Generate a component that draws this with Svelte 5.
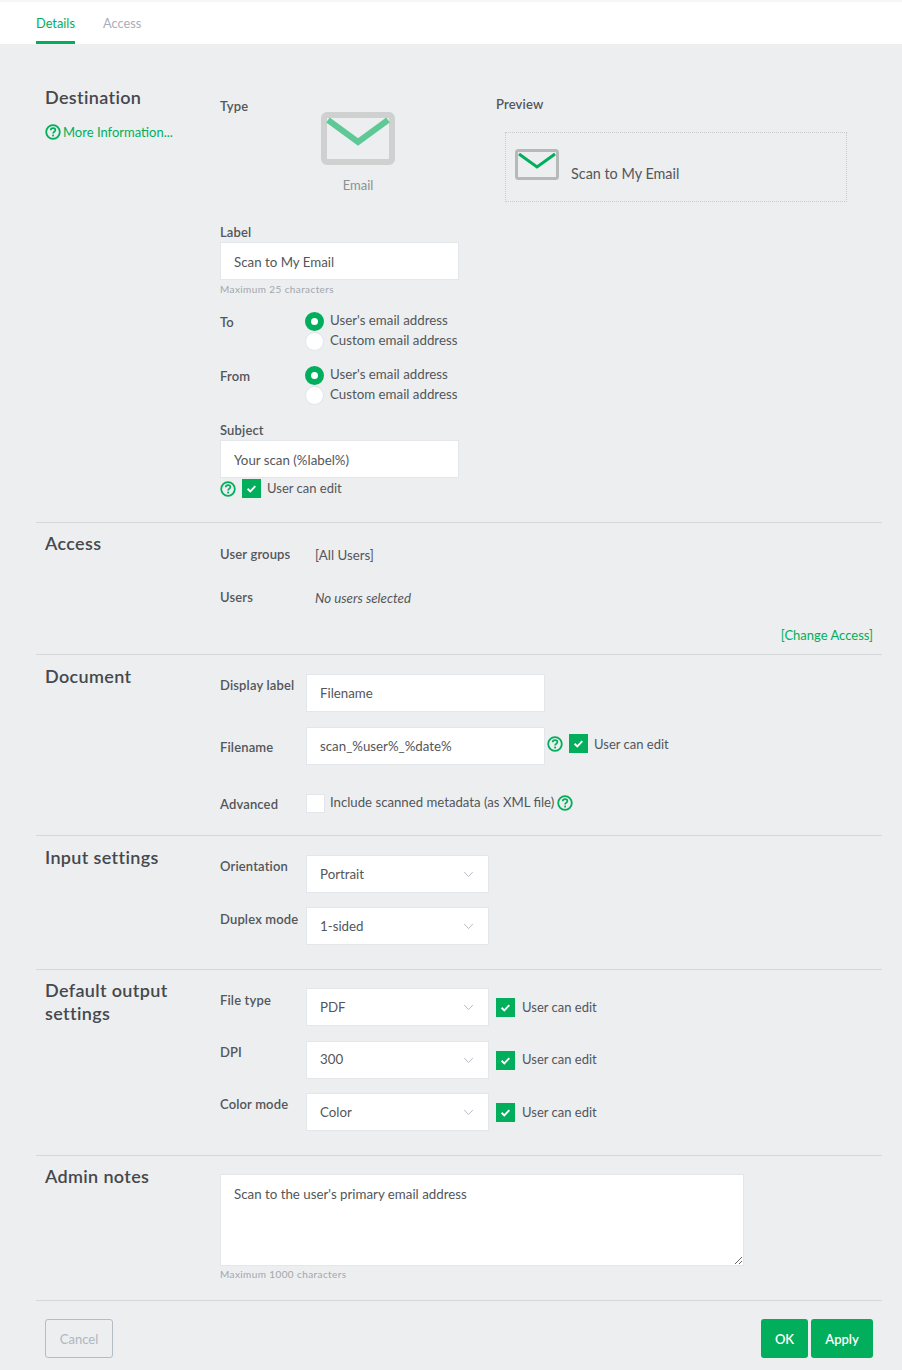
<script>
  const help = 'M8 1.2a6.8 6.8 0 1 0 0 13.6a6.8 6.8 0 0 0 0-13.6z';
</script>

{#snippet helpIcon()}
  <svg class="help" viewBox="0 0 16 16" aria-hidden="true">
    <path d={help} fill="none" stroke="#00ae5b" stroke-width="1.8" />
    <path d="M5.7 6.2c.1-1.4 1.1-2.1 2.4-2.1s2.3.8 2.3 1.9c0 1.7-2.3 1.7-2.3 3.4" fill="none" stroke="#00ae5b" stroke-width="1.7" />
    <rect x="7.2" y="10.6" width="1.8" height="1.8" fill="#00ae5b" />
  </svg>
{/snippet}

{#snippet check()}
  <span class="check on">
    <svg viewBox="0 0 19 19" aria-hidden="true"><path d="M5.6 9.8l2.7 2.6l5-5.2" fill="none" stroke="#fff" stroke-width="1.9" /></svg>
  </span>
{/snippet}

{#snippet select(value)}
  <div class="select">
    <span>{value}</span>
    <svg viewBox="0 0 12 8" aria-hidden="true"><path d="M1 1l5 5.4L11 1" fill="none" stroke="#b4bac2" stroke-width="1.1" /></svg>
  </div>
{/snippet}

{#snippet radios()}
  <div class="radios">
    <div class="radio-row"><span class="radio on"></span><span class="rt">User's email address</span></div>
    <div class="radio-row"><span class="radio"></span><span class="rt">Custom email address</span></div>
  </div>
{/snippet}

<div class="page">
  <nav class="tabs">
    <span class="tab active">Details</span>
    <span class="tab">Access</span>
  </nav>

  <main class="form">
    <section class="sec dest">
      <div class="side">
        <h2>Destination</h2>
        <div class="more">{@render helpIcon()}<span>More Information...</span></div>
      </div>
      <div class="body">
        <div class="dest-top">
          <div class="type">
            <span class="lbl type-lbl">Type</span>
            <div class="type-pick">
              <svg class="env" viewBox="0 0 74 53" aria-hidden="true">
                <rect x="3" y="3" width="68" height="47" rx="3" fill="#eceef0" stroke="#cfd1d1" stroke-width="6" />
                <path d="M7 8l30 22L67 8" fill="none" stroke="#5ec997" stroke-width="6" />
              </svg>
              <span class="email">Email</span>
            </div>
          </div>
          <div class="preview">
            <span class="lbl">Preview</span>
            <div class="pv-box">
              <svg class="env-s" viewBox="0 0 44 31" aria-hidden="true">
                <rect x="1.5" y="1.5" width="41" height="28" rx="2" fill="#eceef0" stroke="#b7b9b9" stroke-width="3" />
                <path d="M4 5l18 13L40 5" fill="none" stroke="#00ae5b" stroke-width="3" />
              </svg>
              <span>Scan to My Email</span>
            </div>
          </div>
        </div>

        <label class="lbl stack l-label" for="f-label">Label</label>
        <input id="f-label" class="input w239 low" value="Scan to My Email" readonly />
        <div class="hint">Maximum 25 characters</div>

        <div class="pair to"><span class="lbl k">To</span>{@render radios()}</div>
        <div class="pair from"><span class="lbl k">From</span>{@render radios()}</div>

        <label class="lbl stack l-subject" for="f-subject">Subject</label>
        <input id="f-subject" class="input w239 low" value="Your scan (%label%)" readonly />
        <div class="edit-row sub-edit">{@render helpIcon()}{@render check()}<span class="ue">User can edit</span></div>
      </div>
    </section>

    <section class="sec access">
      <div class="side"><h2>Access</h2></div>
      <div class="body">
        <div class="ac-row"><span class="lbl">User groups</span><span class="val">[All Users]</span></div>
        <div class="ac-row second"><span class="lbl">Users</span><span class="val"><em>No users selected</em></span></div>
        <div class="change">[Change Access]</div>
      </div>
    </section>

    <section class="sec doc">
      <div class="side"><h2>Document</h2></div>
      <div class="body">
        <div class="row">
          <span class="lbl k">Display label</span>
          <input class="input w239" value="Filename" readonly />
        </div>
        <div class="row filename">
          <span class="lbl k">Filename</span>
          <input class="input w239" value="scan_%user%_%date%" readonly />
          <div class="edit-row fn-edit">{@render helpIcon()}{@render check()}<span class="ue">User can edit</span></div>
        </div>
        <div class="row advanced">
          <span class="lbl k">Advanced</span>
          <span class="check"></span>
          <span class="adv-text">Include scanned metadata (as XML file)</span>
          {@render helpIcon()}
        </div>
      </div>
    </section>

    <section class="sec input-s">
      <div class="side"><h2>Input settings</h2></div>
      <div class="body">
        <div class="row sel-row"><span class="lbl k">Orientation</span>{@render select('Portrait')}</div>
        <div class="row sel-row"><span class="lbl k">Duplex mode</span>{@render select('1-sided')}</div>
      </div>
    </section>

    <section class="sec output">
      <div class="side"><h2>Default output settings</h2></div>
      <div class="body">
        {#each [['File type', 'PDF'], ['DPI', '300'], ['Color mode', 'Color']] as [k, v]}
          <div class="row sel-row">
            <span class="lbl k">{k}</span>{@render select(v)}
            <div class="edit-row sel-edit">{@render check()}<span class="ue">User can edit</span></div>
          </div>
        {/each}
      </div>
    </section>

    <section class="sec notes">
      <div class="side"><h2>Admin notes</h2></div>
      <div class="body">
        <textarea readonly>Scan to the user's primary email address</textarea>
        <div class="hint">Maximum 1000 characters</div>
      </div>
    </section>

    <footer class="actions">
      <button class="btn cancel">Cancel</button>
      <div class="right">
        <button class="btn primary ok">OK</button>
        <button class="btn primary apply">Apply</button>
      </div>
    </footer>
  </main>
</div>

<style>
  :global(body) { margin: 0; background: #eceef0; }
  .page {
    width: 902px;
    height: 1370px;
    overflow: hidden;
    font-family: Lato, "Open Sans", sans-serif;
    font-size: 13.3px;
    line-height: 18px;
    color: #53565a;
    background: #eceef0;
  }
  .tabs {
    box-sizing: border-box;
    height: 44px;
    padding: 0 36px;
    display: flex;
    gap: 28px;
    background: #fff;
    border-top: 2px solid #f6f6f6;
  }
  .tab {
    box-sizing: border-box;
    height: 42px;
    padding-top: 12px;
    font-size: 12.8px;
    color: #a9aeb8;
  }
  .tab.active { color: #00ae5b; border-bottom: 3px solid #00ae5b; }

  .form { margin: 0 20px 0 36px; }
  .sec {
    display: grid;
    grid-template-columns: 175px 1fr;
    padding-left: 9px;
    border-bottom: 1px solid #d5d8da;
    box-sizing: border-box;
  }
  h2 {
    margin: -1px 0 0;
    font-size: 18px;
    line-height: 23px;
    font-weight: 600;
    color: #45484c;
    letter-spacing: 0.35px;
  }
  .lbl { font-weight: 600; font-size: 13px; letter-spacing: 0.15px; color: #53565a; }
  .ue { font-size: 13px; }
  .stack { display: block; }
  .input {
    display: block;
    box-sizing: border-box;
    height: 38px;
    padding: 0 13px;
    border: 1px solid #e3e6ea;
    background: #fff;
    font: inherit;
    color: #53565a;
    outline: none;
  }
  .input.low { padding-top: 2px; }
  .w239 { width: 239px; }
  .hint { font-size: 10px; line-height: 12px; letter-spacing: 0.4px; color: #a3a6aa; margin-top: 3px; }

  .help { display: block; width: 16px; height: 16px; flex: none; }

  .check {
    box-sizing: border-box;
    display: block;
    flex: none;
    width: 19px;
    height: 19px;
    background: #fff;
    border: 1px solid #e3e6ea;
  }
  .check.on { background: #00ae5b; border: 0; }
  .check svg { display: block; width: 19px; height: 19px; }

  .edit-row { display: flex; align-items: center; }
  .edit-row .check { margin-left: 6px; margin-right: 6px; }

  /* destination */
  .dest { height: 479px; padding-top: 43px; }
  .more { display: flex; align-items: center; gap: 2px; margin-top: 14px; color: #00ae5b; font-size: 13px; }
  .dest-top { display: flex; height: 121px; margin-top: 10px; }
  .type { width: 276px; position: relative; display: flex; }
  .type-lbl { width: 101px; }
  .type-pick { display: flex; flex-direction: column; align-items: center; width: 74px; padding-top: 15px; }
  .env { display: block; width: 74px; height: 53px; flex: none; }
  .email { margin-top: 11px; font-size: 13px; color: #8d9094; }
  .preview { margin-top: -2px; }
  .pv-box {
    box-sizing: border-box;
    width: 342px;
    height: 70px;
    margin: 19px 0 0 9px;
    padding: 16px 9px 0;
    border: 1px dotted #c9cbce;
    display: flex;
    gap: 12px;
    font-size: 14.4px;
  }
  .env-s { display: block; width: 44px; height: 31px; flex: none; }
  .pv-box span { margin-top: 16px; }
  .l-label { margin-top: 5px; margin-bottom: 1px; height: 18px; }
  .pair { display: flex; }
  .k { flex: none; width: 86px; }
  .to { margin-top: 17px; }
  .from { margin-top: 16px; }
  .pair .k { padding-top: 1px; }
  .radios { display: flex; flex-direction: column; gap: 2px; margin-left: -1px; }
  .radio-row { display: flex; align-items: center; gap: 6px; height: 18px; }
  .rt { margin-top: -2px; }
  .radio {
    box-sizing: border-box;
    flex: none;
    width: 19px;
    height: 19px;
    border-radius: 50%;
    background: #fff;
    border: 1px solid #e3e6ea;
  }
  .radio.on { border: 6.5px solid #00ae5b; }
  .l-subject { margin-top: 17px; margin-bottom: 1px; height: 18px; }
  .sub-edit { margin-top: 1px; }
  .sub-edit .ue { margin-top: -2px; }

  /* access */
  .access { height: 132px; padding-top: 10px; }
  .ac-row { display: flex; margin-top: 12px; height: 18px; }
  .ac-row.second { margin-top: 25px; }
  .ac-row .lbl { width: 95px; flex: none; }
  .val { padding-top: 1px; }
  .change { margin: 20px 9px 0 0; text-align: right; color: #00ae5b; font-size: 13px; }

  /* document */
  .doc { height: 181px; padding-top: 11px; }
  .doc .body { padding-top: 8px; }
  .row { display: flex; }
  .filename { margin-top: 15px; }
  .filename .k { padding-top: 11px; }
  .doc .row:first-child .k { padding-top: 2px; }
  .fn-edit { margin: 7px 0 0 2px; align-self: flex-start; }
  .advanced { margin-top: 28px; align-items: center; }
  .advanced .k { padding-top: 2px; }
  .adv-text { margin: -2px 3px 0 5px; font-size: 13.2px; }

  /* selects */
  .select {
    box-sizing: border-box;
    flex: none;
    width: 183px;
    height: 38px;
    padding: 0 14px 0 13px;
    background: #fff;
    border: 1px solid #e3e6ea;
    display: flex;
    align-items: center;
    justify-content: space-between;
  }
  .select svg { display: block; width: 11px; height: 7px; }
  .input-s { height: 134px; padding-top: 11px; }
  .input-s .body { padding-top: 8px; }
  .sel-row .k { padding-top: 2px; }
  .sel-row + .sel-row { margin-top: 14px; }
  .input-s .sel-row:nth-child(2) .k { padding-top: 3px; }
  .output { height: 186px; padding-top: 10px; }
  .output .body { padding-top: 8px; }
  .output .sel-row:nth-child(1) .k { padding-top: 3px; }
  .output .sel-row:nth-child(2) { margin-top: 15px; }
  .output .sel-row:nth-child(2) .select span { margin-top: -2px; }
  .output .sel-row:nth-child(2) .ue { margin-top: -2px; }
  .sel-edit { margin-left: 1px; align-self: center; }
  .sel-edit .check { margin-left: 6px; margin-right: 7px; }

  /* notes */
  .notes { height: 145px; padding-top: 10px; }
  .notes .body { padding-top: 8px; }
  textarea {
    display: block;
    box-sizing: border-box;
    width: 524px;
    height: 92px;
    padding: 10px 13px;
    border: 1px solid #e3e6ea;
    background: #fff;
    font: inherit;
    color: #53565a;
    outline: none;
    resize: vertical;
  }
  .notes .hint { margin-top: 2px; }

  /* footer */
  .actions { display: flex; justify-content: space-between; padding: 18px 9px 0; }
  .right { display: flex; gap: 3px; }
  .btn {
    box-sizing: border-box;
    height: 39px;
    border-radius: 3px;
    font: inherit;
    font-size: 13px;
    padding: 0;
    margin: 0;
  }
  .cancel { width: 68px; background: transparent; border: 1px solid #b4bcc6; color: #b0b7c0; }
  .primary { background: #00ae5b; border: 0; color: #fff; font-weight: 600; }
  .ok { width: 47px; }
  .apply { width: 62px; }
</style>
